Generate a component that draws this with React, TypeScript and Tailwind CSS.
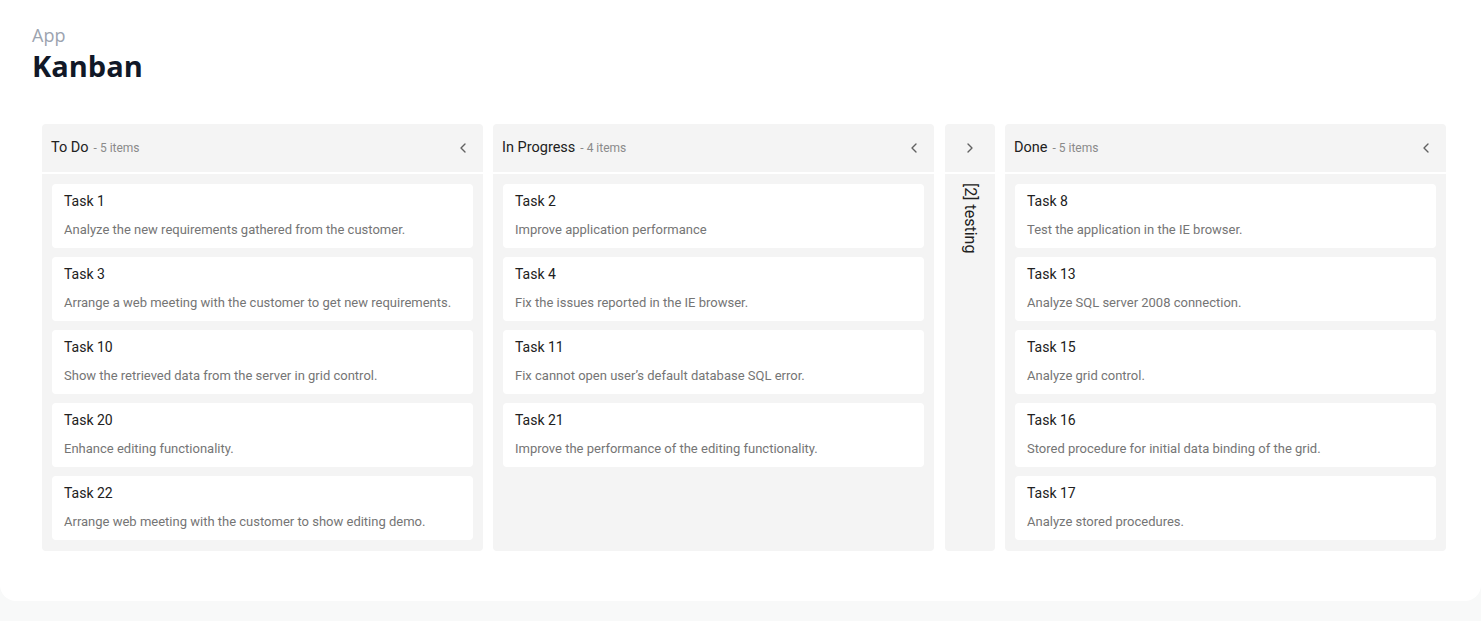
import { ChevronLeft, ChevronRight } from "lucide-react";

type Task = { title: string; summary: string };

const columns: { name: string; tasks: Task[] }[] = [
  {
    name: "To Do",
    tasks: [
      { title: "Task 1", summary: "Analyze the new requirements gathered from the customer." },
      { title: "Task 3", summary: "Arrange a web meeting with the customer to get new requirements." },
      { title: "Task 10", summary: "Show the retrieved data from the server in grid control." },
      { title: "Task 20", summary: "Enhance editing functionality." },
      { title: "Task 22", summary: "Arrange web meeting with the customer to show editing demo." },
    ],
  },
  {
    name: "In Progress",
    tasks: [
      { title: "Task 2", summary: "Improve application performance" },
      { title: "Task 4", summary: "Fix the issues reported in the IE browser." },
      { title: "Task 11", summary: "Fix cannot open user’s default database SQL error." },
      { title: "Task 21", summary: "Improve the performance of the editing functionality." },
    ],
  },
  {
    name: "Done",
    tasks: [
      { title: "Task 8", summary: "Test the application in the IE browser." },
      { title: "Task 13", summary: "Analyze SQL server 2008 connection." },
      { title: "Task 15", summary: "Analyze grid control." },
      { title: "Task 16", summary: "Stored procedure for initial data binding of the grid." },
      { title: "Task 17", summary: "Analyze stored procedures." },
    ],
  },
];

function Column({ name, tasks }: { name: string; tasks: Task[] }) {
  return (
    <div className="flex w-[441px] flex-col gap-[2px]">
      <div className="flex h-[48px] items-center justify-between rounded-t-[4px] bg-[#f4f4f4] pl-[9px] pr-[12px]">
        <div className="flex items-baseline gap-[5px]">
          <span className="text-[14.5px] text-[#212121]">{name}</span>
          <span className="text-[12px] text-[#8a8a8a]">- {tasks.length} items</span>
        </div>
        <ChevronLeft size={16} strokeWidth={2} className="text-[#616161]" />
      </div>
      <div className="flex flex-1 flex-col gap-[9px] rounded-b-[4px] bg-[#f4f4f4] px-[10px] pt-[10px] pb-[9px]">
        {tasks.map((t) => (
          <div key={t.title} className="flex h-[64px] flex-col rounded-[4px] bg-white px-[12px] pt-[8px]">
            <span className="text-[14px] leading-[18px] text-[#212121]">{t.title}</span>
            <span className="mt-[12px] text-[13px] leading-[15px] text-[#757575]">{t.summary}</span>
          </div>
        ))}
      </div>
    </div>
  );
}

export default function App() {
  return (
    <div className="min-h-[621px] bg-[#f8f9f9] font-['Roboto',sans-serif]">
      <div className="h-[601px] rounded-b-[16px] bg-white pt-[24px]">
        <div className="pl-[32px]">
          <div className="font-['Open_Sans',sans-serif] text-[18px] leading-[22px] text-[#9ca3af]">App</div>
          <h1 className="mt-[2px] font-['Open_Sans',sans-serif] text-[29px] font-bold leading-[36px] text-[#111827]">
            Kanban
          </h1>
        </div>
        <div className="mt-[40px] flex h-[427px] gap-[10px] pl-[42px]">
          <Column {...columns[0]} />
          <Column {...columns[1]} />
          <div className="ml-[1px] flex w-[50px] flex-col gap-[2px]">
            <div className="flex h-[48px] items-center justify-center rounded-t-[4px] bg-[#f4f4f4]">
              <ChevronRight size={16} strokeWidth={2} className="text-[#616161]" />
            </div>
            <div className="flex flex-1 justify-center rounded-b-[4px] bg-[#f4f4f4] pt-[9px]">
              <span className="text-[16px] text-[#212121] [writing-mode:vertical-rl]">[2] testing</span>
            </div>
          </div>
          <Column {...columns[2]} />
        </div>
      </div>
    </div>
  );
}
